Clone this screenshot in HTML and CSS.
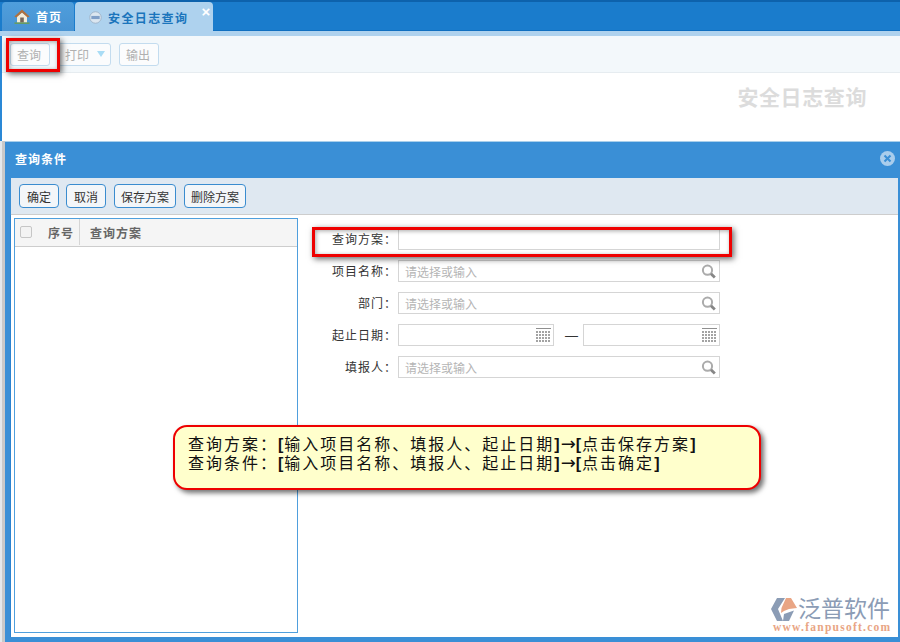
FILE: index.html
```html
<!DOCTYPE html>
<html lang="zh">
<head>
<meta charset="utf-8">
<title>安全日志查询</title>
<link rel="stylesheet" href="styles.css">
</head>
<body>
<div class="app">
  <div class="tabbar">
    <div class="tab tab-home">
      <svg class="home-icon" width="16" height="15" viewBox="0 0 16 15"><path d="M3 7.500 L8 3.500 L13 7.500 V13.500 H3Z" fill="#f3ecd9"/><path d="M8 .6 L15.600 7.600 L13.600 8.400 L8 3.600 L2.400 8.400 L.4 7.600Z" fill="#b0703c"/><rect x="6.200" y="8.500" width="3.600" height="5" fill="#75665a"/><path d="M.5 13.500h15v1.300H.5z" fill="#6d9c48"/></svg>
      <span>首页</span>
    </div>
    <div class="tab tab-active">
      <svg class="tab-icon" width="13" height="13" viewBox="0 0 14 14"><circle cx="7" cy="7" r="6.200" fill="#dbe6f0" stroke="#9fb3c8"/><path d="M2.500 7h9" stroke="#7f9fc8" stroke-width="3.400"/></svg>
      <span>安全日志查询</span>
      <span class="tab-close">×</span>
    </div>
  </div>
  <div class="toolbar">
    <button class="tool tool-query">查询</button>
    <button class="tool tool-print">打印<i class="caret"></i></button>
    <button class="tool tool-export">输出</button>
  </div>
  <div class="report-head"><span class="report-title">安全日志查询</span></div>
  <div class="dialog-wrap">
    <div class="dialog">
      <div class="dialog-title">
        <span>查询条件</span>
        <svg class="dialog-close" width="15" height="15" viewBox="0 0 16 16"><circle cx="8" cy="8" r="8" fill="#a9cdec"/><path d="M4.800 4.800l6.400 6.400M11.200 4.800l-6.400 6.400" stroke="#3a8fd6" stroke-width="2.200"/></svg>
      </div>
      <div class="dialog-bar">
        <button class="btn">确定</button>
        <button class="btn">取消</button>
        <button class="btn btn-wide">保存方案</button>
        <button class="btn btn-wide">删除方案</button>
      </div>
      <div class="dialog-body">
        <div class="plan-list">
          <div class="plan-head">
            <span class="cell-check"><i class="checkbox"></i></span>
            <span class="cell-no">序号</span>
            <span class="cell-name">查询方案</span>
          </div>
        </div>
        <div class="form">
          <div class="row"><label>查询方案：</label><div class="field field-wide"></div></div>
          <div class="row"><label>项目名称：</label><div class="field field-wide"><span class="ph">请选择或输入</span><svg class="search" width="16" height="15" viewBox="0 0 16 15"><circle cx="6.500" cy="6.200" r="4.600" fill="none" stroke="#ababab" stroke-width="2"/><path d="M10 9.800l3.800 3.800" stroke="#868686" stroke-width="2.800"/></svg></div></div>
          <div class="row"><label>部门：</label><div class="field field-wide"><span class="ph">请选择或输入</span><svg class="search" width="16" height="15" viewBox="0 0 16 15"><circle cx="6.500" cy="6.200" r="4.600" fill="none" stroke="#ababab" stroke-width="2"/><path d="M10 9.800l3.800 3.800" stroke="#868686" stroke-width="2.800"/></svg></div></div>
          <div class="row">
            <label>起止日期：</label>
            <div class="field field-date-a"><svg class="cal" width="15" height="14" viewBox="0 0 15 14"><path d="M0 .5h15" stroke="#8f8f8f"/><path d="M0 4h15M0 7h15M0 10h15M0 13h15" stroke="#a3a3a3" stroke-width="2" stroke-dasharray="2 1"/></svg></div>
            <span class="dash">—</span>
            <div class="field field-date-b"><svg class="cal" width="15" height="14" viewBox="0 0 15 14"><path d="M0 .5h15" stroke="#8f8f8f"/><path d="M0 4h15M0 7h15M0 10h15M0 13h15" stroke="#a3a3a3" stroke-width="2" stroke-dasharray="2 1"/></svg></div>
          </div>
          <div class="row"><label>填报人：</label><div class="field field-wide"><span class="ph">请选择或输入</span><svg class="search" width="16" height="15" viewBox="0 0 16 15"><circle cx="6.500" cy="6.200" r="4.600" fill="none" stroke="#ababab" stroke-width="2"/><path d="M10 9.800l3.800 3.800" stroke="#868686" stroke-width="2.800"/></svg></div></div>
        </div>
      </div>
    </div>
  </div>
  <div class="mark mark-query"></div>
  <div class="mark mark-plan"></div>
  <div class="callout">
    <div>查询方案：<b>[</b>输入项目名称、填报人、起止日期<b>]</b><i>→</i><b>[</b>点击保存方案<b>]</b></div>
    <div>查询条件：<b>[</b>输入项目名称、填报人、起止日期<b>]</b><i>→</i><b>[</b>点击确定<b>]</b></div>
  </div>
  <div class="logo">
    <div class="logo-main">
      <svg width="26" height="24" viewBox="0 0 26 24"><path d="M6 0h8L7 11l5 12H6L0 11Z" fill="#8b9cb5"/><path d="M15 0h5l6 10-8 1-5 2-3 2 .5-5Z" fill="#e9a584"/><path d="M13 16l10-3.500-5 10.500h-6Z" fill="#8b9cb5"/></svg>
      <span>泛普软件</span>
    </div>
    <div class="logo-url">www.fanpusoft.com</div>
  </div>
</div>
</body>
</html>
```
FILE: styles.css
```css
* { box-sizing: border-box; }
html, body { margin: 0; padding: 0; }
body { width: 900px; height: 642px; overflow: hidden; background: #fff; font-family: "Liberation Sans", "Noto Sans CJK SC", sans-serif; font-size: 12px; color: #333; }
.app { position: relative; width: 900px; height: 642px; background: #2a88d6; padding-left: 2px; display: flex; flex-direction: column; }

.tabbar { height: 36px; flex: none; margin-left: -2px; padding: 2px 0 0 2px; background: linear-gradient(#0d62ac 0 2px, #1a7ccc 2px 30px, #0f6fc0 30px 31px, #aed2ee 31px); display: flex; align-items: flex-start; gap: 1px; }
.tab { display: flex; align-items: center; font-weight: bold; font-size: 12px; letter-spacing: 1px; border-radius: 4px 4px 0 0; }
.tab-home { width: 72px; height: 29px; background: linear-gradient(#4f9edc, #4793d3); color: #fff; padding-left: 12px; gap: 6px; }
.tab-active { position: relative; width: 138px; height: 34px; background: #aed2ee; color: #1b75bc; padding: 0 0 4px 14px; gap: 6px; letter-spacing: 1.4px; }
.tab-close { position: absolute; top: 1px; right: 0; color: #fff; font-size: 15px; line-height: 18px; font-weight: bold; width: 14px; text-align: center; letter-spacing: 0; }
.tab-icon, .home-icon { flex: none; }

.toolbar { height: 37px; flex: none; background: #f3f8fb; border-bottom: 1px solid #e6ecf0; display: flex; align-items: center; padding-left: 8px; gap: 8px; }
.tool { height: 23px; background: #fbfcfd; border: 1px solid #c3dcef; border-radius: 3px; color: #b0b0b0; font: 12px "Liberation Sans", "Noto Sans CJK SC", sans-serif; padding: 0 2px 0 0; display: flex; align-items: center; justify-content: center; }
.tool-query { width: 40px; }
.tool-print { width: 53px; justify-content: flex-start; padding-left: 6px; }
.tool-export { width: 40px; }
.caret { width: 0; height: 0; margin-left: 8px; border: 4.500px solid transparent; border-top: 6px solid #a9dcf5; border-bottom: 0; }

.report-head { height: 68px; flex: none; background: #fff; display: flex; justify-content: flex-end; padding: 13px 33px 0 0; }
.report-title { font-size: 21px; line-height: 24px; font-weight: bold; letter-spacing: .6px; color: #dcdcdc; }

.dialog-wrap { flex: 1; min-height: 0; margin-left: -2px; padding-left: 5px; background: linear-gradient(90deg, #e4e8ec 0 2px, #c9c9c9 2px 5px); display: flex; }
.dialog { flex: 1; background: #3a8fd6; border-top: 1px solid #a9cfeb; display: flex; flex-direction: column; }
.dialog-title { height: 36px; flex: none; display: flex; align-items: center; justify-content: space-between; padding: 0 5px 3px 10px; color: #fff; font-size: 12px; font-weight: bold; letter-spacing: 1px; }
.dialog-bar { height: 37px; flex: none; background: #dfe8f1; border-bottom: 1px solid #cdcdcd; margin: 0 2px 0 6px; display: flex; align-items: center; padding: 0 0 0 8px; gap: 7px; }
.btn { height: 24px; width: 40px; padding: 0; background: #f3f6f9; border: 1px solid #3a8ccf; border-radius: 4px; color: #333; font: 12px "Liberation Sans", "Noto Sans CJK SC", sans-serif; }
.btn-wide { width: 62px; margin-left: 1px; }
.dialog-body { flex: 1; min-height: 0; background: #fff; margin: 0 2px 5px 5px; border-left: 1px solid #2a82d0; display: flex; padding: 3px 0 4px 3px; }

.plan-list { width: 284px; flex: none; border: 1px solid #4f9fdd; background: #fff; }
.plan-head { height: 28px; padding-bottom: 1px; background: #f5f5f5; border-bottom: 1px solid #cdcdcd; display: flex; align-items: center; font-size: 12px; color: #666; font-weight: bold; }
.cell-check { width: 27px; display: flex; padding-left: 5px; }
.checkbox { width: 12px; height: 12px; border: 1px solid #c6c6c6; border-radius: 2px; background: #f3f3f3; }
.cell-no { width: 38px; height: 100%; display: flex; align-items: center; border-right: 1px solid #d5d5d5; padding-left: 6px; letter-spacing: 1px; }
.cell-name { padding-left: 10px; letter-spacing: 1px; }

.form { padding-top: 10px; display: flex; flex-direction: column; gap: 10px; }
.row { display: flex; align-items: center; height: 22px; }
.row label { width: 100px; padding: 0 1px 1px 0; text-align: right; color: #333; font-size: 12px; letter-spacing: 1px; }
.field { position: relative; height: 22px; background: #fff; border: 1px solid #d5d5d5; display: flex; align-items: center; padding-left: 6px; }
.field-wide { width: 322px; }
.field-date-a { width: 156px; }
.field-date-b { width: 137px; }
.dash { width: 29px; padding-left: 11px; color: #333; font-size: 13px; }
.ph { color: #b5b5b5; font-size: 12px; }
.search { position: absolute; right: 2px; top: 3px; }
.cal { position: absolute; right: 2px; top: 3px; }

.mark { position: absolute; border: 3px solid #ee0000; box-shadow: 2px 2px 6px rgba(0,0,0,.6), inset 1px 1px 4px rgba(0,0,0,.35); }
.mark-query { left: 6px; top: 38px; width: 54px; height: 34px; }
.mark-plan { left: 312px; top: 227px; width: 420px; height: 30px; }

.callout { position: absolute; left: 173px; top: 425px; width: 588px; height: 65px; background: #ffffcc; border: 2px solid #ee0000; border-radius: 14px; box-shadow: 3px 3px 5px rgba(0,0,0,.55); padding: 8px 0 0 13px; font-size: 16px; line-height: 19px; color: #111; letter-spacing: 2px; white-space: nowrap; }
.callout b { font-weight: bold; letter-spacing: 1px; }
.callout i { font-style: normal; font-size: 18px; line-height: 0; letter-spacing: 0; font-family: "DejaVu Sans", sans-serif; }

.logo { position: absolute; left: 771px; top: 597px; width: 125px; display: flex; flex-direction: column; }
.logo-main { display: flex; align-items: center; height: 25px; color: #8b9cb5; font-size: 23px; }
.logo-main span { line-height: 25px; white-space: nowrap; margin-left: 1px; }
.logo-url { font-family: "Liberation Serif", serif; font-size: 11.500px; font-weight: bold; color: #e9a584; letter-spacing: 1.250px; white-space: nowrap; margin-left: 2px; line-height: 10px; }
```
